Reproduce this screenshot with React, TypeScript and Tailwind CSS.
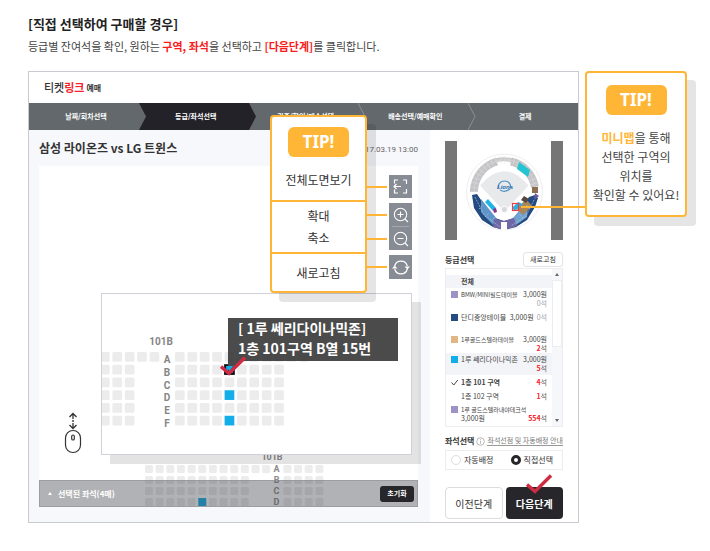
import type { ReactNode } from "react";

const steps = ["날짜/회차선택", "등급/좌석선택", "권종/할인/매수선택", "배송선택/예매확인", "결제"];
const rowNames = ["A", "B", "C", "D", "E", "F"];

function StepBar() {
  return (
    <ol className="flex h-[27px] bg-[#62686b] text-[7px] font-bold text-white">
      {steps.map((label, i) => (
        <li
          key={label}
          aria-current={i === 1 ? "step" : undefined}
          className={`relative flex flex-1 items-center justify-center pl-1 whitespace-nowrap ${i === 1 ? "bg-[#232228]" : ""}`}
        >
          {i > 0 && (
            <svg viewBox="0 0 8 27" className="absolute top-0 left-0 h-full w-2" fill="none">
              {i === 1 && <path d="M0 0 7 13.5 0 27Z" fill="#62686b" />}
              {i === 2 && <path d="M0 0 7 13.5 0 27Z" fill="#232228" />}
              {i > 2 && <path d="M0 0 7 13.5 0 27" stroke="#8b9093" />}
            </svg>
          )}
          {label}
        </li>
      ))}
    </ol>
  );
}

function TipBadge() {
  return (
    <strong className="mx-auto flex h-[30px] w-[61px] items-center justify-center rounded-md bg-[#ffb636] font-['Noto_Sans','Noto_Sans_CJK_KR',sans-serif] text-[17px] font-bold text-white">
      TIP!
    </strong>
  );
}

function Seat({ x, y, size, fill = "#ececec" }: { x: number; y: number; size: number; fill?: string }) {
  return <rect x={x} y={y} width={size} height={size} rx={fill === "#ececec" ? 1.5 : 0} fill={fill} />;
}

function BaseSeats() {
  const seats: ReactNode[] = [];
  for (let r = 0; r < 4; r++) {
    for (let c = 0; c < 17; c++) {
      const gap = r === 0 ? c === 12 : c >= 10 && c <= 12;
      if (gap) continue;
      seats.push(
        <Seat key={`${r}-${c}`} x={c * 10.65} y={14 + r * 11} size={8} fill={r === 3 && c === 5 ? "#13aeea" : undefined} />,
      );
    }
  }
  return (
    <svg viewBox="0 0 179 56" className="absolute right-[94px] bottom-0 h-14 w-[179px]">
      {seats}
      <g className="font-[Roboto,sans-serif] text-[9px] font-bold" fill="#8a8a8a" textAnchor="middle">
        <text x="127" y="9">101B</text>
        {rowNames.slice(0, 4).map((n, i) => (
          <text key={n} x="131.5" y={21 + i * 11}>{n}</text>
        ))}
      </g>
    </svg>
  );
}

function ZoomedSeats() {
  const seats: ReactNode[] = [];
  rowNames.forEach((name, r) => {
    const y = 58 + r * 12.75;
    const left = r === 0 ? 5 : 3;
    for (let c = 0; c < left; c++) seats.push(<Seat key={`${name}l${c}`} x={-2 + c * 12.4} y={y} size={9.7} />);
    const right = r === 0 ? 11 : 9;
    for (let c = 0; c < right; c++) {
      const open = c === 4 && r % 2 === 1;
      seats.push(<Seat key={`${name}r${c}`} x={73 + c * 12.4} y={y} size={9.7} fill={open ? "#13aeea" : undefined} />);
    }
  });
  return (
    <svg viewBox="0 0 309 160" className="h-full w-full">
      {seats}
      <rect x="123.1" y="71.2" width="8.7" height="8.7" fill="none" stroke="#111" strokeWidth="2" />
      <g className="font-[Roboto,sans-serif] text-[10px] font-bold" fill="#858585" textAnchor="middle">
        <text x="59" y="51">101B</text>
        {rowNames.map((n, i) => (
          <text key={n} x="65" y={69 + i * 12.75}>{n}</text>
        ))}
      </g>
      <path d="M126 67V80L138 67Z" fill="#4b4b4b" />
      <path d="M124 72H131L127.5 77Z" fill="#13aeea" />
    </svg>
  );
}

function RedCheck({ className }: { className: string }) {
  return (
    <svg viewBox="0 0 26 20" className={className} fill="none">
      <path d="M1 10.5 9 17.5 25 1.5" stroke="#cf2c44" strokeWidth="3.4" />
    </svg>
  );
}

function ZoomIcon({ plus }: { plus?: boolean }) {
  return (
    <svg viewBox="0 0 16 16" className="size-4" fill="none" stroke="#fff" strokeWidth="1.1">
      <circle cx="7.5" cy="7.5" r="6.2" />
      <path d="M12 12 15 15M4.5 7.5H10.5" />
      {plus && <path d="M7.5 4.5V10.5" />}
    </svg>
  );
}

function MapTools() {
  return (
    <div className="absolute top-[9px] right-[6px] flex w-[23px] flex-col">
      <button aria-label="전체도면보기" className="flex h-[23px] items-center justify-center bg-[#868b94]">
        <svg viewBox="0 0 15 15" className="size-[15px]" fill="none" stroke="#fff" strokeWidth="1.2">
          <path d="M5 1H1.5V4.5M10 1H13.5V5M13.5 10V14H10M5 14H1.5V10.5M1 7.5H8M3.5 5 1 7.5 3.5 10" />
        </svg>
      </button>
      <div className="mt-[5px] flex h-[47px] flex-col bg-[#868b94]">
        <button aria-label="확대" className="flex flex-1 items-center justify-center"><ZoomIcon plus /></button>
        <hr className="mx-[3px] border-[#a4a8af]" />
        <button aria-label="축소" className="flex flex-1 items-center justify-center"><ZoomIcon /></button>
      </div>
      <button aria-label="새로고침" className="mt-[5px] flex h-6 items-center justify-center bg-[#868b94]">
        <svg viewBox="0 0 18 16" className="h-4 w-[18px]" fill="none" stroke="#fff" strokeWidth="1.2">
          <path d="M2.7 7A6.5 6.5 0 0 1 15.3 7M15.3 10A6.5 6.5 0 0 1 2.7 10" />
          <path d="M0 9.5 2.7 6.500 5.400 9.500ZM12.600 7.500 15.300 10.500 18 7.500Z" fill="#fff" stroke="none" />
        </svg>
      </button>
    </div>
  );
}

function ToolTip() {
  return (
    <aside className="absolute -top-[51px] right-[51px] w-[97px] rounded border-2 border-[#ffb636] bg-white text-center text-[12px] text-[#333] shadow-[9px_9px_0_rgba(0,0,0,0.1)]">
      <div className="h-[83px] pt-[10px]">
        <TipBadge />
        <p className="mt-[14px] leading-[18px]">전체도면보기</p>
      </div>
      <div className="h-[54px] border-y-2 border-[#ffb636] pt-[3px] leading-[22px]">
        <p>확대</p>
        <p>축소</p>
      </div>
      <p className="h-[37px] pt-2 leading-[22px]">새로고침</p>
      <span className="absolute top-[69px] left-full h-[2px] w-[22px] bg-[#ffb636]" />
      <span className="absolute top-[97px] left-full h-[2px] w-[22px] bg-[#ffb636]" />
      <span className="absolute top-[121px] left-full h-[2px] w-[22px] bg-[#ffb636]" />
      <span className="absolute top-[149px] left-full h-[2px] w-[22px] bg-[#ffb636]" />
    </aside>
  );
}

function SeatArea() {
  return (
    <section className="flex flex-1 flex-col bg-[#f7f8fc] pr-3 pb-[15px] pl-[10px]">
      <div className="flex h-9 items-center justify-between">
        <h2 className="text-[12px] font-bold whitespace-nowrap text-[#333]">삼성 라이온즈 vs LG 트윈스</h2>
        <time className="pt-1 font-[Roboto,sans-serif] text-[8px] text-[#666]">2017.03.19 13:00</time>
      </div>
      <div className="relative flex flex-1 flex-col justify-end bg-white">
        <BaseSeats />
        <MapTools />
        <svg viewBox="0 0 18 42" className="absolute top-[246px] right-[336px] h-[42px] w-[18px]" fill="none" stroke="#333">
          <path d="M9 2V7M9 11V16M5.5 5 9 1.5 12.5 5M5.5 13 9 16.5 12.5 13" strokeWidth="1.3" />
          <circle cx="9" cy="9" r=".9" fill="#333" stroke="none" />
          <rect x="1.5" y="18.5" width="15" height="22" rx="7.5" strokeWidth="1.2" />
          <rect x="7.7" y="23" width="2.6" height="5" rx="1.3" strokeWidth="1.2" />
        </svg>
        <div className="relative flex h-[27px] items-center border border-[#8f9094]/60 bg-[#3c3e46]/40 pr-[3px] pl-2 text-[8px] font-bold text-white">
          <svg viewBox="0 0 4 3" className="mr-[6px] h-[3px] w-1"><path d="M0 3 2 0 4 3Z" fill="#fff" /></svg>
          선택된 좌석(4매)
          <button className="ml-auto h-4 w-[34px] rounded-[3px] bg-[#26262b] text-[7px] font-bold">초기화</button>
        </div>
        <div className="absolute top-[127px] right-[6px] h-[162px] w-[311px] border border-[#d0d0d8] bg-white shadow-[9px_9px_0_rgba(0,0,0,0.11)]">
          <ZoomedSeats />
          <p className="absolute top-[24px] left-[126px] h-[43px] w-[170px] bg-[#323232]/88 pl-[10px] text-[14px] leading-[20px] font-bold whitespace-nowrap text-white">
            [ 1루 쎄리다이나믹존]
            <br />
            1층 101구역 B열 15번
          </p>
          <RedCheck className="absolute top-[62px] left-[118px] h-5 w-[26px]" />
        </div>
        <ToolTip />
      </div>
    </section>
  );
}

function MiniMap() {
  return (
    <div className="flex h-[99px] justify-center border-x-12 border-[#767676]">
      <svg viewBox="0 0 94 99" className="h-full w-[94px]">
        <circle cx="47.5" cy="51" r="38" fill="#fff" stroke="#eeeeee" />
        <path d="M16.8 51A30.7 32.5 0 0 1 40 20.5" fill="none" stroke="#c5c5c7" strokeWidth="8" />
        <path d="M38 19.5Q47 17 56 19.5" fill="none" stroke="#c9c9cb" strokeWidth="4" />
        <path d="M54 20.5A30.7 32.5 0 0 1 78 46" fill="none" stroke="#c5c5c7" strokeWidth="8" />
        <path d="M17 51A30.7 32.5 0 0 1 78 46" fill="none" stroke="#dedee0" strokeWidth="8" strokeDasharray=".5 4" />
        <path d="M17 51A30.7 32.5 0 0 1 78 46" fill="none" stroke="#dddddf" strokeWidth=".5" />
        <path d="M62 21 73 29 71 36 60 28Z" fill="#26c4d0" />
        <path d="M75 46H81V52H75Z" fill="#8d6e50" />
        <path d="M23 44.5Q47 16 71.5 44.5L50 68H45Z" fill="#e8e9eb" />
        <circle cx="47.3" cy="68.5" r="3.2" fill="#d9d9dc" stroke="#fff" />
        <path d="M15 54 20 53 24 59 38 77 47 80 57 77 72 56 78 54 81 57 78 66 70 79 59 86 47 89 36 86 25 79 17 67Z" fill="#234b82" />
        <path d="M24 58 40 78 36 84 24 71Z" fill="#5e94c7" />
        <path d="M71 60 55 78 59 84 70 76Z" fill="#72a3d0" />
        <path d="M37 78 47 80 57 77 60 85 47 89 36 86Z" fill="#7267a6" />
        <path d="M44 81H50V89H44Z" fill="#fff" />
        <path d="M69 58 75 65 66 74 60 68Z" fill="#aa8657" />
        <path d="M67 55 72 58 69 62 64 59Z" fill="#554942" />
        <path d="M31 58 39 67 36 70 28 61Z" fill="#22b4e5" />
        <path d="M36 68 39 67 40 71 37 72Z" fill="#88338e" />
        <path d="M61 61 66 63 58 70 55 67Z" fill="#22b4e5" />
        <path d="M78 52 82 55 77 59Z" fill="#7058a3" />
        <path d="M18 56 27 74 43 86M77 59 69 75 54 85M22 68 26 64M28 76 32 72M73 67 69 64M66 77 62 73M34 80 38 76" fill="none" stroke="#a9c5e1" strokeWidth=".7" strokeDasharray="2 1" />
        <path d="M42 47A6 5 0 1 1 53 47M43 49Q48 52 53 48" fill="none" stroke="#4d91c7" strokeWidth="1.2" />
        <text x="40" y="48" className="font-['Liberation_Sans',sans-serif] text-[6px] font-bold italic" fill="#1e69ac">Lions</text>
        <rect x="55.5" y="62.5" width="6" height="7" fill="none" stroke="#f23b42" strokeWidth="1.2" />
      </svg>
    </div>
  );
}

function Swatch({ className }: { className: string }) {
  return <span className={`mt-px size-[7px] shrink-0 ${className}`} />;
}

function Left({ count, none }: { count: number; none?: boolean }) {
  return (
    <span className={none ? "text-[#a0a3ad]" : "text-[#555]"}>
      {none ? count : <b className="text-[#f5222d]">{count}</b>}석
    </span>
  );
}

function Grade({ swatch, name, count, small, className }: { swatch: string; name: string; count: number; small?: boolean; className: string }) {
  return (
    <li className={`px-[5px] ${className}`}>
      <button className="block w-full text-left">
        <span className="flex gap-[3px]">
          <Swatch className={swatch} />
          <span className="flex flex-1 justify-between">
            <span className={small ? "text-[6px]" : ""}>{name}</span>
            <span>3,000원</span>
          </span>
        </span>
        <span className="block text-right"><Left count={count} none={count === 0} /></span>
      </button>
    </li>
  );
}

function GradeList() {
  return (
    <div className="mt-px flex h-[159px] border border-[#ecedf1]">
      <ul className="flex-1 pt-[6px] text-[7px] leading-[9px] whitespace-nowrap text-[#444]">
        <li className="h-[13px] bg-[#f3f4f8] pl-[15px] leading-[13px] font-bold">
          <button>전체</button>
        </li>
        <Grade swatch="bg-[#9c92c4]" name="BMW/MINI필드테이블" count={0} small className="h-[22px] pt-[2px]" />
        <li className="h-[23px] px-[5px] pt-[3px]">
          <button className="flex w-full gap-[3px] text-left">
            <Swatch className="bg-[#254d82]" />
            <span>단디중앙테이블</span>
            <span className="ml-auto">3,000원</span>
            <Left count={0} none />
          </button>
        </li>
        <Grade swatch="bg-[#dfb684]" name="1루골드스텔라테이블" count={2} small className="h-5 pt-[2px]" />
        <Grade swatch="bg-[#13aeea]" name="1루 쎄리다이나믹존" count={5} className="h-[22px] bg-[#f3f4f8] pt-[2px]" />
        <li className="h-[14px] px-[5px] pt-[3px]">
          <button className="flex w-full gap-[3px] text-left">
            <svg viewBox="0 0 7 7" className="mt-px size-[7px]" fill="none" stroke="#444"><path d="M.5 3.5 2.8 6 6.8 1" /></svg>
            <b>1층 101 구역</b>
            <span className="ml-auto"><Left count={4} /></span>
          </button>
        </li>
        <li className="h-[14px] pt-[3px] pr-[5px] pl-[15px]">
          <button className="flex w-full justify-between"><span>1층 102 구역</span><Left count={1} /></button>
        </li>
        <li className="px-[5px] pt-[2px]">
          <button className="flex w-full gap-[3px] text-left">
            <Swatch className="bg-[#9c92c4]" />
            <span className="flex-1">
              <span className="block text-[6px]">1루 골드스텔라내야테크석</span>
              <span className="flex justify-between"><span>3,000원</span><Left count={554} /></span>
            </span>
          </button>
        </li>
      </ul>
      <div className="flex w-[10px] flex-col items-center bg-[#f6f7fa]">
        <svg viewBox="0 0 4 3" className="my-1 h-[3px] w-1"><path d="M0 3 2 0 4 3Z" fill="#666" /></svg>
        <span className="h-[67px] w-full border border-[#ecedf1] bg-white" />
        <svg viewBox="0 0 4 3" className="mt-auto mb-1 h-[3px] w-1"><path d="M0 0 2 3 4 0Z" fill="#666" /></svg>
      </div>
    </div>
  );
}

function SidePanel() {
  return (
    <section className="w-[148px] bg-white px-[15px] pt-[11px] pb-[3px]">
      <MiniMap />
      <div className="mt-3 flex h-[15px] items-center justify-between">
        <h3 className="text-[8px] font-bold text-[#333]">등급선택</h3>
        <button className="h-[15px] w-10 rounded-[3px] border border-[#e3e3e8] text-[7px] leading-[13px] text-[#333]">새로고침</button>
      </div>
      <GradeList />
      <div className="mt-[7px] flex h-[14px] items-center justify-between whitespace-nowrap">
        <h3 className="text-[8px] font-bold text-[#333]">좌석선택</h3>
        <svg viewBox="0 0 9 9" className="size-[9px]" fill="none" stroke="#999" strokeWidth=".7">
          <circle cx="4.5" cy="4.5" r="3.8" />
          <path d="M4.5 2.2V3M4.5 3.8V6.8" />
        </svg>
        <a href="#guide" className="border-b border-[#999] text-[7px] leading-[9px] text-[#777]">좌석선점 및 자동배정 안내</a>
      </div>
      <div className="mt-[2px] flex h-5 items-center justify-between border border-[#ecedf1] pr-[9px] pl-[5px] text-[8px] text-[#333]">
        <label className="flex items-center gap-[3px]">
          <input type="radio" name="seat" className="size-[10px] appearance-none rounded-full border border-[#ddd] checked:border-3 checked:border-[#26262b]" />
          자동배정
        </label>
        <label className="flex items-center gap-[3px]">
          <input type="radio" name="seat" defaultChecked className="size-[10px] appearance-none rounded-full border border-[#ddd] checked:border-3 checked:border-[#26262b]" />
          직접선택
        </label>
      </div>
      <div className="mt-[17px] grid grid-cols-2 gap-[3px] text-[10px]">
        <button className="h-8 rounded border border-[#ddd] text-[#333]">이전단계</button>
        <button className="relative h-8 rounded bg-[#26262b] font-bold text-white">
          다음단계
          <RedCheck className="absolute -top-[13px] left-[20px] h-5 w-[26px]" />
        </button>
      </div>
    </section>
  );
}

export default function App() {
  return (
    <main className="bg-white pt-4 pr-[23px] pb-7 pl-7 font-['Noto_Sans_CJK_KR',sans-serif] text-[#333]">
      <h1 className="text-[13px] leading-4 font-bold text-[#222]">[직접 선택하여 구매할 경우]</h1>
      <p className="mt-[6px] text-[11px] leading-4 text-[#444]">
        등급별 잔여석을 확인, 원하는 <b className="text-[#f91c1c]">구역, 좌석</b>을 선택하고{" "}
        <b className="text-[#f91c1c]">[다음단계]</b>를 클릭합니다.
      </p>
      <div className="mt-[17px] flex items-start gap-[6px]">
        <div className="flex-1 border border-[#c9c9d2]">
          <header className="flex h-[31px] items-center pl-[15px] text-[11px]">
            <span className="font-medium text-[#333]">티켓</span>
            <span className="font-bold text-[#f5222d]">링크</span>
            <span className="ml-[2px] text-[8px] font-bold">예매</span>
          </header>
          <StepBar />
          <div className="flex">
            <SeatArea />
            <SidePanel />
          </div>
        </div>
        <aside className="relative h-[146px] w-[102px] rounded border-2 border-[#ffb636] bg-white pt-3 text-center shadow-[9px_9px_0_rgba(0,0,0,0.1)]">
          <TipBadge />
          <p className="mt-[13px] text-[12px] leading-[19px] whitespace-nowrap text-[#444]">
            <b className="text-[#ffb636]">미니맵</b>을 통해
            <br />
            선택한 구역의
            <br />
            위치를
            <br />
            확인할 수 있어요!
          </p>
          <span className="absolute top-[133px] right-full h-[2px] w-[66px] bg-[#ffb636]" />
        </aside>
      </div>
    </main>
  );
}
